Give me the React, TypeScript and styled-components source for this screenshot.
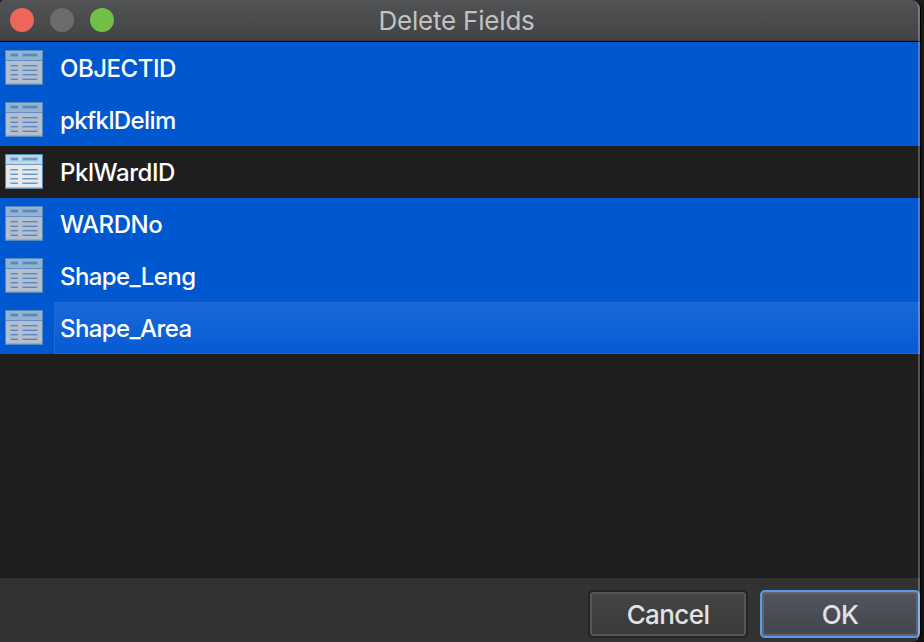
import React from 'react';
import styled, { createGlobalStyle } from 'styled-components';

const GlobalStyle = createGlobalStyle`
  * { box-sizing: border-box; }
  html, body { margin: 0; padding: 0; background: #12110f; overflow: hidden; }
`;

const Desktop = styled.div`
  width: 924px;
  height: 642px;
  overflow: hidden;
  background: linear-gradient(#1b1a17, #12110f);
  font-family: Inter, 'Liberation Sans', sans-serif;
`;

const Window = styled.main`
  position: relative;
  display: flex;
  flex-direction: column;
  width: 921px;
  height: 642px;
  overflow: hidden;
  border-right: 1px solid #000;
  border-radius: 4px 9px 9px 0;
  background: #1e1e1e;

  &::after {
    content: '';
    position: absolute;
    inset: 0;
    border-right: 2px solid rgba(255, 255, 255, 0.24);
    border-radius: 0 8px 8px 0;
    pointer-events: none;
  }
`;

const TitleBar = styled.header`
  display: grid;
  grid-template-columns: 120px 1fr 128px;
  align-items: center;
  flex: none;
  height: 42px;
  border-bottom: 1px solid #000;
  box-shadow: inset 0 -1px #353637;
  background: linear-gradient(#525355, #424345);
`;

const Controls = styled.div`
  display: flex;
  gap: 16px;
  padding: 0 0 1px 10px;
`;

const Control = styled.span<{ $color: string }>`
  width: 24px;
  height: 24px;
  border-radius: 50%;
  background: ${(p) => p.$color};
`;

const Title = styled.h1`
  margin: 0;
  padding-left: 1px;
  text-align: center;
  font-size: 26px;
  line-height: 40px;
  font-weight: 400;
  letter-spacing: -0.2px;
  color: #c1c2c3;
`;

const List = styled.ul`
  flex: 1;
  margin: 0;
  padding: 0;
  list-style: none;
`;

const Row = styled.li<{ $selected: boolean }>`
  display: flex;
  height: 52px;
  background: ${(p) => (p.$selected ? '#0058d0' : '#1e1e1e')};
`;

const IconCell = styled.div`
  flex: none;
  width: 54px;
  padding: 8px 0 0 5px;
`;

const Icon = styled.svg`
  display: block;
  width: 38px;
  height: 35px;
`;

const Label = styled.div<{ $focused?: boolean; $spacing: number }>`
  flex: 1;
  height: 52px;
  padding-left: 5px;
  border: 1px solid ${(p) => (p.$focused ? '#2069d6' : 'transparent')};
  background: ${(p) => (p.$focused ? 'linear-gradient(#1a68d8, #065bd3)' : 'none')};
  font-size: 24px;
  line-height: 51px;
  font-weight: 500;
  letter-spacing: ${(p) => p.$spacing}px;
  color: #fff;
`;

const Footer = styled.footer`
  display: flex;
  justify-content: flex-end;
  flex: none;
  gap: 12px;
  height: 64px;
  padding-top: 12px;
  background: #323232;
`;

const Button = styled.button<{ $primary?: boolean }>`
  width: 160px;
  height: 48px;
  margin: 0;
  padding: 2px 0 0;
  border: 2px solid ${(p) => (p.$primary ? '#5a9ae8' : '#242424')};
  border-radius: 5px;
  background: ${(p) => (p.$primary ? 'linear-gradient(#50555e, #41454e)' : 'linear-gradient(#454545, #393939)')};
  box-shadow: inset 0 0 0 2px ${(p) => (p.$primary ? '#61666e' : '#555')};
  font: 500 26px/42px Inter, 'Liberation Sans', sans-serif;
  letter-spacing: -0.6px;
  color: #e2e2e3;
`;

function TableIcon({ selected }: { selected: boolean }) {
  const line = selected ? '#5b87bd' : '#6d96c7';
  const halo = selected ? '#91aac8' : '#a9c3df';
  return (
    <Icon viewBox="0 0 38 35" shapeRendering="crispEdges" aria-hidden="true">
      <rect width="38" height="35" fill={selected ? '#5689bd' : '#5f89b5'} />
      <rect x="1" y="1" width="36" height="33" fill={selected ? '#95aac5' : '#a8bfd9'} />
      <rect x="1" y="1" width="36" height="9" fill={selected ? '#92b4d0' : '#b9d8ea'} />
      <rect x="1" y="10" width="36" height="1" fill={selected ? '#628fc2' : '#729fcb'} />
      <rect x="1" y="11" width="36" height="22" fill={selected ? '#b3bfd0' : '#e7e8e9'} />
      <rect x="5" y="3" width="8" height="4" fill={selected ? '#7fa4c9' : '#9cbfdd'} />
      <rect x="6" y="4" width="7" height="2" fill={line} />
      <rect x="17" y="3" width="16" height="4" fill={selected ? '#7fa4c9' : '#9cbfdd'} />
      <rect x="18" y="4" width="14" height="2" fill={line} />
      {[15, 19, 24, 28].map((y, i) => (
        <g key={y}>
          <rect x="5" y={y} width="8" height="2" fill={halo} />
          <rect x="17" y={y} width="16" height="2" fill={halo} />
          <rect x="6" y={i % 2 ? y + 1 : y} width="7" height="1" fill={line} />
          <rect x="18" y={i % 2 ? y + 1 : y} width="14" height="1" fill={line} />
        </g>
      ))}
    </Icon>
  );
}

const fields = [
  { name: 'OBJECTID', selected: true, spacing: -0.47 },
  { name: 'pkfklDelim', selected: true, spacing: -0.6 },
  { name: 'PklWardID', selected: false, spacing: -0.43 },
  { name: 'WARDNo', selected: true, spacing: -0.5 },
  { name: 'Shape_Leng', selected: true, spacing: -0.6 },
  { name: 'Shape_Area', selected: true, spacing: -0.6, focused: true },
];

export default function App() {
  return (
    <Desktop>
      <GlobalStyle />
      <Window>
        <TitleBar>
          <Controls>
            <Control $color="#ee6659" />
            <Control $color="#6b6c6e" />
            <Control $color="#72bf47" />
          </Controls>
          <Title>Delete Fields</Title>
        </TitleBar>
        <List>
          {fields.map((field) => (
            <Row key={field.name} $selected={field.selected}>
              <IconCell>
                <TableIcon selected={field.selected} />
              </IconCell>
              <Label $focused={field.focused} $spacing={field.spacing}>
                {field.name}
              </Label>
            </Row>
          ))}
        </List>
        <Footer>
          <Button>Cancel</Button>
          <Button $primary>OK</Button>
        </Footer>
      </Window>
    </Desktop>
  );
}
